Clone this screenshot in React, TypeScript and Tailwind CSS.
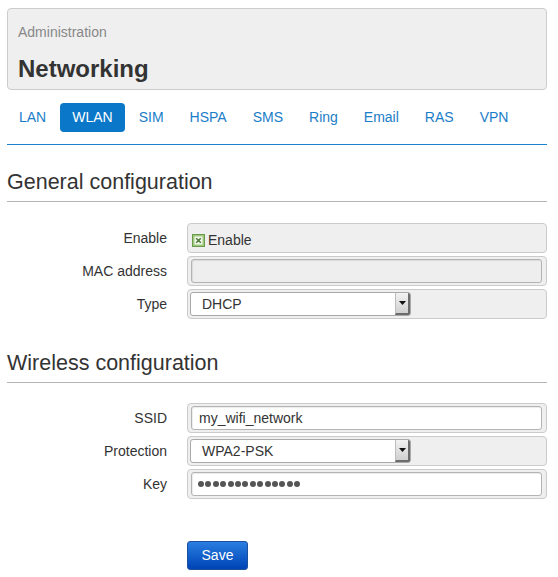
import React from 'react';

const TABS = ['LAN', 'WLAN', 'SIM', 'HSPA', 'SMS', 'Ring', 'Email', 'RAS', 'VPN'];
const ACTIVE_TAB = 'WLAN';

const font = { fontFamily: '"Liberation Sans", Arial, sans-serif' };

function SectionTitle({ children }: { children: React.ReactNode }) {
  return (
    <h2 className="text-[21.5px] leading-[28px] text-[#333] pb-[5px] border-b border-[#b5b5b5]">
      {children}
    </h2>
  );
}

function Row({ label, children }: { label: string; children: React.ReactNode }) {
  return (
    <div className="flex items-center gap-[20px]">
      <label className="w-[160px] text-right text-[14px] text-[#333]">{label}</label>
      <div className="flex-1 h-[30px] flex items-center px-[2px] bg-[#efefef] border border-[#cbcbcb] rounded-[4px]">
        {children}
      </div>
    </div>
  );
}

// fake old-style select with a beveled arrow button
function FakeSelect({ value }: { value: string }) {
  return (
    <div className="w-[221px] h-[24px] flex items-stretch bg-white border border-[#a9a9a9] rounded-[3px] overflow-hidden">
      <span className="flex-1 pl-[11px] text-[14px] leading-[22px] text-[#333]">{value}</span>
      <span className="w-[15px] flex items-center justify-center bg-gradient-to-b from-[#f2f2f2] to-[#d0d0d0] border-l border-[#bdbdbd] border-r-2 border-b-2 border-r-[#6c6c6c] border-b-[#6c6c6c]">
        <svg width="7" height="4" viewBox="0 0 7 4">
          <path d="M0 0h7L3.5 4z" fill="#111" />
        </svg>
      </span>
    </div>
  );
}

function TextInput({ value, disabled, password }: { value: string; disabled?: boolean; password?: boolean }) {
  return (
    <div
      className={`ml-[1px] w-[351px] h-[24px] flex items-center border border-[#b3b3b3] rounded-[3px] shadow-[inset_1px_1px_1px_rgba(0,0,0,0.08)] ${
        disabled ? 'bg-[#eeeeee]' : 'bg-white'
      }`}
    >
      {password ? (
        <span className="pl-[6px] flex gap-[1.4px]">
          {Array.from({ length: 14 }).map((_, i) => (
            <span key={i} className="w-[6px] h-[6px] rounded-full bg-[#555]" />
          ))}
        </span>
      ) : (
        <span className="pl-[7px] text-[14px] text-[#333]">{value}</span>
      )}
    </div>
  );
}

export default function App() {
  return (
    <div className="min-h-[577px] w-[558px] bg-white pl-[7px] pr-[11px] pt-[8px]" style={font}>
      {/* page header */}
      <div className="h-[82px] bg-[#efefef] border border-[#cccccc] rounded-[4px] px-[10px] pt-[13px]">
        <div className="text-[14px] leading-[20px] text-[#888]">Administration</div>
        <h1 className="mt-[12px] text-[24px] leading-[30px] font-bold text-[#333]">Networking</h1>
      </div>

      {/* tabs */}
      <nav className="mt-[13px] pb-[12px] border-b border-[#1a82cf] flex gap-[2px]">
        {TABS.map((t) => (
          <span
            key={t}
            className={`px-[12px] h-[29px] leading-[29px] text-[14px] rounded-[4px] ${
              t === ACTIVE_TAB ? 'bg-[#0a77c8] text-white' : 'text-[#1a7dc8]'
            }`}
          >
            {t}
          </span>
        ))}
      </nav>

      {/* general */}
      <div className="mt-[23px]">
        <SectionTitle>General configuration</SectionTitle>
      </div>
      <div className="mt-[21px] flex flex-col gap-[3px]">
        <Row label="Enable">
          <span className="ml-[2px] mt-[5px] flex items-center gap-[3px]">
            <span className="w-[13px] h-[13px] flex items-center justify-center bg-[#9cc97c] border border-[#6c9a4d]">
              <svg width="9" height="9" viewBox="0 0 9 9">
                <rect x="0.5" y="0.5" width="8" height="8" fill="#f4f9ef" />
                <path d="M2.2 2.2l4.6 4.6M6.8 2.2L2.2 6.8" stroke="#4f7a34" strokeWidth="1.6" />
              </svg>
            </span>
            <span className="text-[14px] text-[#333]">Enable</span>
          </span>
        </Row>
        <Row label="MAC address">
          <TextInput value="" disabled />
        </Row>
        <Row label="Type">
          <FakeSelect value="DHCP" />
        </Row>
      </div>

      {/* wireless */}
      <div className="mt-[30px]">
        <SectionTitle>Wireless configuration</SectionTitle>
      </div>
      <div className="mt-[20px] flex flex-col gap-[3px]">
        <Row label="SSID">
          <TextInput value="my_wifi_network" />
        </Row>
        <Row label="Protection">
          <FakeSelect value="WPA2-PSK" />
        </Row>
        <Row label="Key">
          <TextInput value="" password />
        </Row>
      </div>

      <div className="mt-[42px] pl-[180px]">
        <button className="w-[61px] h-[29px] text-[14px] text-white rounded-[3px] border border-[#1d4f9f] bg-gradient-to-b from-[#2a7de0] to-[#0043b6]">
          Save
        </button>
      </div>
    </div>
  );
}
